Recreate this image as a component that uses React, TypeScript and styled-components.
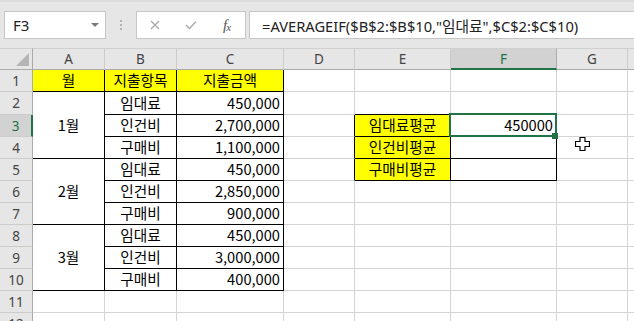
import React from "react";
import styled, { createGlobalStyle } from "styled-components";

const Global = createGlobalStyle`
  html, body { margin: 0; padding: 0; background: #fff; overflow: hidden; }
  body { width: 634px; height: 321px; }
`;

const Page = styled.div`
  position: relative;
  width: 634px;
  height: 321px;
  overflow: hidden;
  font-family: "Noto Sans", "Noto Sans CJK KR", sans-serif;
`;

const Bar = styled.div`
  height: 48px;
  box-sizing: border-box;
  background: #e6e6e6;
  border-top: 2px solid #dcdcdc;
  display: flex;
  align-items: flex-start;
  padding: 9px 0 0 4px;
`;

const NameBox = styled.div`
  width: 102px;
  height: 28px;
  box-sizing: border-box;
  background: #fff;
  border: 1px solid #c6c6c6;
  display: flex;
  align-items: center;
  padding: 0 6px 0 8px;
  font-size: 15px;
  color: #222;
`;

const Caret = styled.span`
  margin-left: auto;
  width: 0;
  height: 0;
  border-left: 4px solid transparent;
  border-right: 4px solid transparent;
  border-top: 4px solid #7a7a7a;
`;

const Dots = styled.svg`
  margin-left: 14px;
  flex: none;
`;

const FxGroup = styled.div`
  margin-left: 14px;
  width: 110px;
  height: 28px;
  box-sizing: border-box;
  background: #fff;
  border: 1px solid #c6c6c6;
  display: grid;
  grid-template-columns: 36px 35px 37px;
  align-items: center;
  justify-items: center;
`;

const Fx = styled.span`
  font-family: "Liberation Serif", serif;
  font-style: italic;
  font-size: 15px;
  color: #555;
  letter-spacing: -1px;
  sub {
    font-size: 11px;
    vertical-align: -1px;
  }
`;

const FormulaBox = styled.div`
  margin-left: 3px;
  flex: 1;
  height: 28px;
  box-sizing: border-box;
  background: #fff;
  border: 1px solid #c6c6c6;
  border-right: none;
  display: flex;
  align-items: center;
  padding-left: 12px;
  font-size: 14.7px;
  color: #222;
  white-space: nowrap;
  overflow: hidden;
`;

const Sheet = styled.div`
  display: grid;
  grid-template-columns: 33px 72px 72px 107px 71px 96px 106px 71px 1fr;
  grid-template-rows: 22px 22px 23px repeat(10, 22px);
`;

type Pos = { $r: number; $c: number; $rs?: number };

const Corner = styled.div<Pos>`
  grid-row: ${(p) => p.$r};
  grid-column: ${(p) => p.$c};
  box-sizing: border-box;
  background: #e6e6e6;
  border-top: 1px solid #d0d0d0;
  border-right: 1px solid #ababab;
  border-bottom: 1px solid #ababab;
  display: flex;
  align-items: flex-end;
  justify-content: flex-end;
  padding: 0 3px 3px 0;
`;

const ColHead = styled.div<Pos & { $sel?: boolean }>`
  grid-row: ${(p) => p.$r};
  grid-column: ${(p) => p.$c};
  box-sizing: border-box;
  background: ${(p) => (p.$sel ? "#d2d2d2" : "#e6e6e6")};
  border-top: 1px solid #d0d0d0;
  border-right: 1px solid ${(p) => (p.$sel ? "#ababab" : "#cbcbcb")};
  border-bottom: ${(p) => (p.$sel ? "2px solid #217346" : "1px solid #ababab")};
  display: flex;
  align-items: center;
  justify-content: center;
  font-size: 13.5px;
  color: ${(p) => (p.$sel ? "#217346" : "#444")};
`;

const RowHead = styled.div<Pos & { $sel?: boolean }>`
  grid-row: ${(p) => p.$r};
  grid-column: ${(p) => p.$c};
  box-sizing: border-box;
  background: ${(p) => (p.$sel ? "#d2d2d2" : "#e6e6e6")};
  border-right: ${(p) => (p.$sel ? "2px solid #217346" : "1px solid #ababab")};
  border-bottom: 1px solid #cbcbcb;
  display: flex;
  align-items: center;
  justify-content: center;
  font-size: 13.5px;
  color: ${(p) => (p.$sel ? "#217346" : "#444")};
`;

const Cell = styled.div<
  Pos & { $bg?: string; $align?: "left" | "center" | "right"; $rb?: boolean; $bb?: boolean }
>`
  grid-row: ${(p) => p.$r} / span ${(p) => p.$rs ?? 1};
  grid-column: ${(p) => p.$c};
  position: relative;
  box-sizing: border-box;
  min-width: 0;
  background: ${(p) => p.$bg ?? "#fff"};
  border-right: 1px solid ${(p) => (p.$rb ? "#000" : "#d4d4d4")};
  border-bottom: 1px solid ${(p) => (p.$bb ? "#000" : "#d4d4d4")};
  display: flex;
  align-items: center;
  justify-content: ${(p) =>
    p.$align === "right" ? "flex-end" : p.$align === "left" ? "flex-start" : "center"};
  padding: 0 3px;
  font-family: "Noto Sans CJK KR", "Noto Sans", sans-serif;
  font-size: 14.67px;
  line-height: 1;
  color: #000;
  white-space: nowrap;
`;

const Selection = styled.div`
  position: absolute;
  top: -2px;
  left: -2px;
  right: -1px;
  bottom: -1px;
  border: 2px solid #217346;
  pointer-events: none;
  z-index: 2;
`;

const FillHandle = styled.div`
  position: absolute;
  right: -2px;
  bottom: -3px;
  width: 6px;
  height: 6px;
  box-sizing: border-box;
  background: #217346;
  z-index: 3;
`;

const Cursor = styled.svg`
  position: absolute;
  left: 575px;
  top: 137px;
  z-index: 4;
`;

const YELLOW = "#ffff00";
const cols = ["A", "B", "C", "D", "E", "F", "G", ""];
const items = ["임대료", "인건비", "구매비"];
const amounts = [
  "450,000",
  "2,700,000",
  "1,100,000",
  "450,000",
  "2,850,000",
  "900,000",
  "450,000",
  "3,000,000",
  "400,000",
];
const months = ["1월", "2월", "3월"];
const avgs = ["임대료평균", "인건비평균", "구매비평균"];

export default function App() {
  const cells: React.ReactNode[] = [];
  const ROWS = 12;

  for (let r = 1; r <= ROWS; r++) {
    const gr = r + 1;
    cells.push(
      <RowHead key={`rh${r}`} $r={gr} $c={1} $sel={r === 3}>
        {r}
      </RowHead>
    );

    if (r === 1) {
      cells.push(
        <Cell key="A1" $r={gr} $c={2} $bg={YELLOW} $rb $bb>
          월
        </Cell>
      );
    } else if (r >= 2 && r <= 10) {
      if ((r - 2) % 3 === 0) {
        cells.push(
          <Cell key={`A${r}`} $r={gr} $rs={3} $c={2} $rb $bb>
            {months[(r - 2) / 3]}
          </Cell>
        );
      }
    } else {
      cells.push(<Cell key={`A${r}`} $r={gr} $c={2} />);
    }

    if (r === 1) {
      cells.push(
        <Cell key="B1" $r={gr} $c={3} $bg={YELLOW} $rb $bb>
          지출항목
        </Cell>,
        <Cell key="C1" $r={gr} $c={4} $bg={YELLOW} $rb $bb>
          지출금액
        </Cell>
      );
    } else if (r <= 10) {
      cells.push(
        <Cell key={`B${r}`} $r={gr} $c={3} $rb $bb>
          {items[(r - 2) % 3]}
        </Cell>,
        <Cell key={`C${r}`} $r={gr} $c={4} $align="right" $rb $bb>
          {amounts[r - 2]}
        </Cell>
      );
    } else {
      cells.push(<Cell key={`B${r}`} $r={gr} $c={3} />, <Cell key={`C${r}`} $r={gr} $c={4} />);
    }

    cells.push(<Cell key={`D${r}`} $r={gr} $c={5} $rb={r >= 3 && r <= 5} />);

    if (r >= 3 && r <= 5) {
      cells.push(
        <Cell key={`E${r}`} $r={gr} $c={6} $bg={YELLOW} $rb $bb>
          {avgs[r - 3]}
        </Cell>,
        <Cell key={`F${r}`} $r={gr} $c={7} $align="right" $rb $bb>
          {r === 3 ? "450000" : ""}
          {r === 3 && (
            <>
              <Selection />
              <FillHandle />
            </>
          )}
        </Cell>
      );
    } else {
      cells.push(
        <Cell key={`E${r}`} $r={gr} $c={6} $bb={r === 2} />,
        <Cell key={`F${r}`} $r={gr} $c={7} $bb={r === 2} />
      );
    }

    cells.push(<Cell key={`G${r}`} $r={gr} $c={8} />, <Cell key={`H${r}`} $r={gr} $c={9} />);
  }

  return (
    <Page>
      <Global />
      <Bar>
        <NameBox>
          F3
          <Caret />
        </NameBox>
        <Dots width="2" height="28" viewBox="0 0 2 28">
          <rect x="0" y="9" width="2" height="2" fill="#b4b4b4" />
          <rect x="0" y="13" width="2" height="2" fill="#b4b4b4" />
          <rect x="0" y="17" width="2" height="2" fill="#b4b4b4" />
        </Dots>
        <FxGroup>
          <svg width="10" height="10" viewBox="0 0 10 10">
            <path d="M1 1 L9 9 M9 1 L1 9" stroke="#a8a8a8" strokeWidth="1.3" fill="none" />
          </svg>
          <svg width="12" height="10" viewBox="0 0 12 10">
            <path d="M1 5 L4.5 8.5 L11 1.5" stroke="#b0b0b0" strokeWidth="1.6" fill="none" />
          </svg>
          <Fx>
            f<sub>x</sub>
          </Fx>
        </FxGroup>
        <FormulaBox>=AVERAGEIF($B$2:$B$10,"임대료",$C$2:$C$10)</FormulaBox>
      </Bar>
      <Sheet>
        <Corner $r={1} $c={1}>
          <svg width="13" height="13" viewBox="0 0 13 13">
            <polygon points="13,0 13,13 0,13" fill="#b5b5b5" />
          </svg>
        </Corner>
        {cols.map((c, i) => (
          <ColHead key={`ch${i}`} $r={1} $c={i + 2} $sel={c === "F"}>
            {c}
          </ColHead>
        ))}
        {cells}
      </Sheet>
      <Cursor width="15" height="14" viewBox="0 0 15 14">
        <path
          d="M5 0.5 H10 V4.5 H14.5 V9.5 H10 V13.5 H5 V9.5 H0.5 V4.5 H5 Z"
          fill="#fff"
          stroke="#000"
          strokeWidth="1.2"
          strokeLinejoin="round"
        />
      </Cursor>
    </Page>
  );
}
